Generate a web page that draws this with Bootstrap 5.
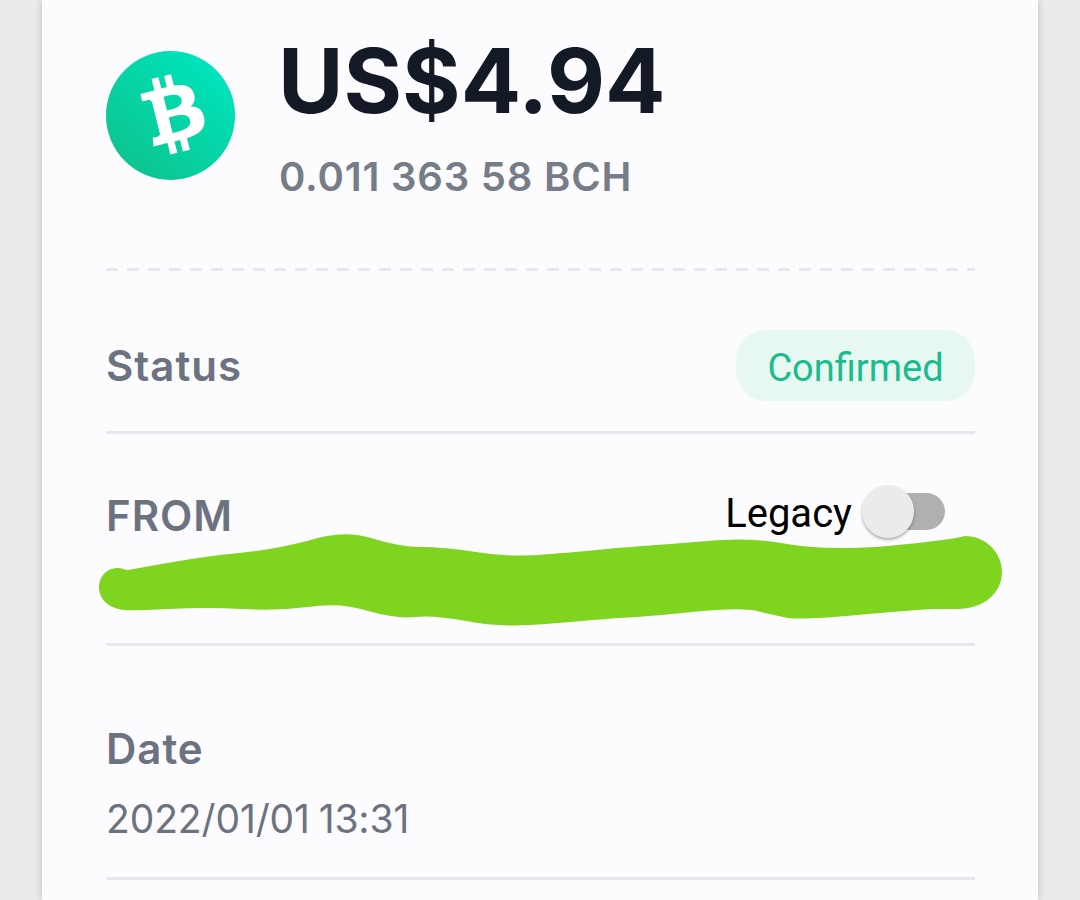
<!doctype html>
<html lang="en">
<head>
<meta charset="utf-8">
<title>Transaction</title>
<link href="https://cdn.jsdelivr.net/npm/bootstrap@5.3.0/dist/css/bootstrap.min.css" rel="stylesheet">
<style>
html,body{height:900px;overflow:hidden;background:#ebebed;}
.tx-page{width:996px;height:900px;margin-left:42px;padding:0 63px 0 64px;background:#fcfcff;box-shadow:0 0 8px rgba(0,0,0,.2);position:relative;font-family:Inter,"Liberation Sans",sans-serif;}
.tx-hero{height:271px;padding-top:51px;gap:43px;background:repeating-linear-gradient(90deg,#e6e8ec 0 12px,transparent 12px 21px) left bottom/100% 3px no-repeat;}
.tx-coin{width:129px;height:129px;flex:none;display:block;}
.tx-amount{font-size:89.5px;font-weight:700;line-height:1;color:#131a26;margin-top:-15px;}
.tx-crypto{font-size:40px;font-weight:600;line-height:1;letter-spacing:.8px;color:#767c88;margin:31px 0 0 1px;}
.tx-label{font-size:42px;font-weight:600;line-height:1;letter-spacing:1px;color:#6c7280;}
.tx-row{border-bottom:3px solid #e6e8ec;}
.tx-status{height:163px;padding-top:29px;}
.tx-pill{width:239px;height:71px;border-radius:30px;padding-top:4px;background:#e7f8f3;color:#1abc8c;font:38px/1 Roboto,sans-serif;}
.tx-from{height:212px;padding-top:61px;}
.tx-legacy{font:40px/1 Roboto,sans-serif;color:#000;gap:10px;margin-right:30px;margin-top:-10px;}
.tx-legacy-text{margin-top:5px;}
.tx-switch{width:83px;height:53px;position:relative;display:block;}
.tx-track{position:absolute;left:8px;right:0;top:8px;height:37px;border-radius:19px;background:#b0b0b2;}
.tx-thumb{position:absolute;left:0;top:0;width:52px;height:53px;border-radius:50%;background:#ebebeb;box-shadow:0 2px 3px rgba(0,0,0,.3);}
.tx-date{height:234px;padding-top:82px;}
.tx-value{font:39px/1 Inter,sans-serif;color:#6c7280;margin-top:29px;word-spacing:-2px;letter-spacing:-.12px;}
.tx-scrawl{position:absolute;left:-42px;top:0;width:1080px;height:900px;pointer-events:none;}
</style>
</head>
<body>
<div class="tx-page">
  <div class="tx-hero d-flex align-items-start">
    <svg class="tx-coin" viewBox="0 0 32 32" aria-hidden="true">
      <defs><linearGradient id="coinfill" x1="0.85" y1="0.1" x2="0.15" y2="0.9"><stop offset="0" stop-color="#00e4bc"/><stop offset="1" stop-color="#0cc48f"/></linearGradient></defs>
      <circle cx="16" cy="16" r="16" fill="url(#coinfill)"/>
      <path fill="#fff" transform="rotate(-28 16 16) translate(.5 -.2)" d="M23.189 14.02c.314-2.096-1.283-3.223-3.465-3.975l.708-2.84-1.728-.43-.69 2.765c-.454-.114-.92-.22-1.385-.326l.695-2.783L15.596 6l-.708 2.839c-.376-.086-.746-.17-1.104-.26l.002-.009-2.384-.595-.46 1.846s1.283.294 1.256.312c.7.175.826.638.805 1.006l-.806 3.235c.048.012.11.03.18.057l-.183-.045-1.13 4.532c-.086.212-.303.531-.793.41.018.025-1.256-.313-1.256-.313l-.858 1.978 2.25.561c.418.105.828.215 1.231.318l-.715 2.872 1.727.43.708-2.84c.472.127.93.245 1.378.357l-.706 2.828 1.728.43.715-2.866c2.948.558 5.164.333 6.097-2.333.752-2.146-.037-3.385-1.588-4.192 1.13-.26 1.98-1.003 2.207-2.538zm-3.95 5.538c-.533 2.147-4.148.986-5.32.695l.95-3.805c1.172.293 4.929.872 4.37 3.11zm.535-5.569c-.487 1.953-3.495.96-4.47.717l.86-3.45c.975.243 4.118.696 3.61 2.733z"/>
    </svg>
    <div>
      <div class="tx-amount">US$4.94</div>
      <div class="tx-crypto">0.011 363 58 BCH</div>
    </div>
  </div>
  <div class="tx-row tx-status d-flex justify-content-between align-items-center">
    <span class="tx-label">Status</span>
    <span class="tx-pill d-flex align-items-center justify-content-center">Confirmed</span>
  </div>
  <div class="tx-row tx-from d-flex justify-content-between align-items-start">
    <span class="tx-label">FROM</span>
    <span class="tx-legacy d-flex align-items-center"><span class="tx-legacy-text">Legacy</span><span class="tx-switch"><span class="tx-track"></span><span class="tx-thumb"></span></span></span>
  </div>
  <div class="tx-row tx-date">
    <div class="tx-label">Date</div>
    <div class="tx-value">2022/01/01 13:31</div>
  </div>
  <svg class="tx-scrawl" viewBox="0 0 1080 900" aria-hidden="true">
    <path fill="#7fd41f" d="M99 587C99 575 108 568 118 568C122 568 125 570 128 570L167 563Q207 556 239 553Q272 550 307 541Q343 529 371 538Q400 547 421 547Q443 547 476 552Q510 558 550 554Q590 551 616 548Q643 546 695 542Q747 536 787 544Q827 551 888 546Q950 540 965 536C985 536 1002 552 1002 572C1002 592 985 609 957 609L935 609Q913 610 858 615Q803 620 788 618Q773 615 757 611Q742 607 692 612Q643 617 618 618Q593 620 546 624Q500 628 466 621Q433 615 415 617Q397 619 368 611Q340 602 308 607Q277 611 242 609Q207 607 168 609Q130 611 125 610C110 609 99 600 99 587Z"/>
  </svg>
</div>
</body>
</html>
